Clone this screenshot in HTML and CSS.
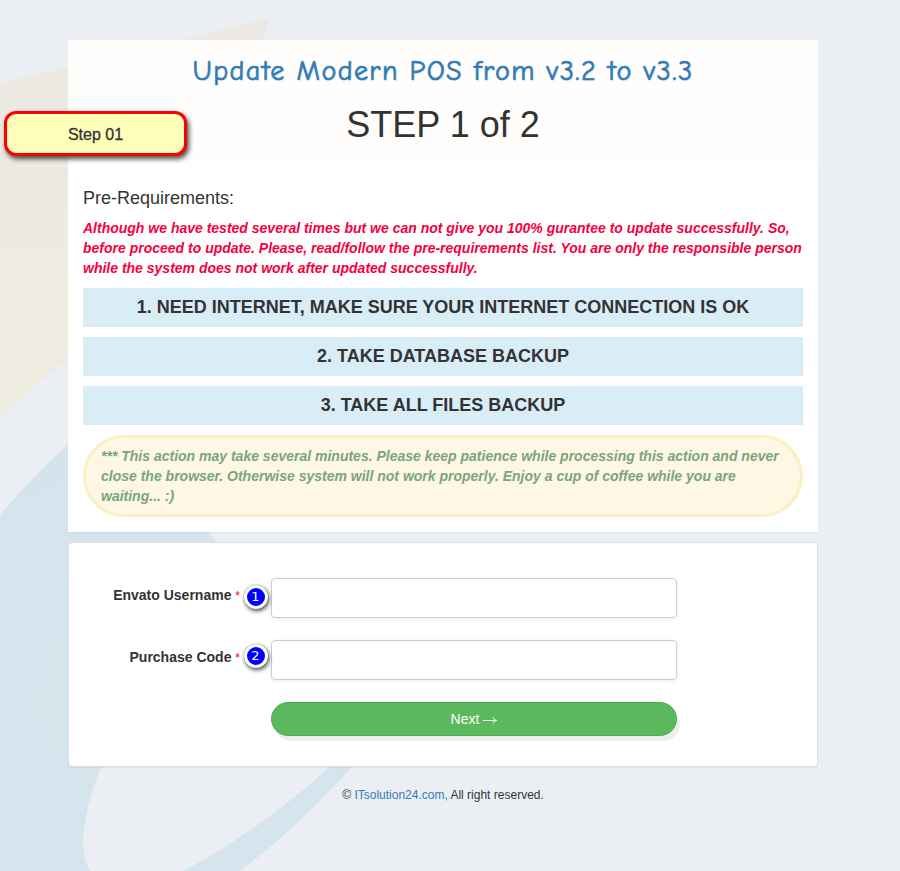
FILE: index.html
```html
<!DOCTYPE html>
<html lang="en">
<head>
<meta charset="utf-8">
<title>Update Modern POS</title>
<link rel="stylesheet" href="styles.css">
</head>
<body>
<svg class="backdrop" viewBox="0 0 900 871" aria-hidden="true">
  <defs>
    <radialGradient id="blue" gradientUnits="userSpaceOnUse" cx="130" cy="700" r="240">
      <stop offset="0" stop-color="#d3e6ec"/><stop offset="1" stop-color="#d6e3ed"/>
    </radialGradient>
    <linearGradient id="sand" x1="0" y1="0" x2="0" y2="1">
      <stop offset="0" stop-color="#ece9e4"/><stop offset="1" stop-color="#eeebdf"/>
    </linearGradient>
  </defs>
  <path fill="url(#sand)" d="M0 83L68 67L181 40L269 18Q240 160 150 300L68 359Q40 381 0 419Z"/>
  <path fill="url(#blue)" d="M0 515Q34 475 68 444L150 475Q188 510 217 542L360 720L352 767Q290 835 239 871H0Z"/>
  <path fill="#ebeff4" d="M90 871C77 850 84 810 101 767L170 640L420 700L329 767C290 804 230 847 183 871Z"/>
</svg>
<main class="page">
  <section class="intro">
    <header class="heading">
      <h1 class="title">Update Modern POS from v3.2 to v3.3</h1>
      <h2 class="step">STEP 1 of 2</h2>
    </header>
    <div class="requirements">
      <h3>Pre-Requirements:</h3>
      <p class="warning">Although we have tested several times but we can not give you 100% gurantee to update successfully. So,<br>before proceed to update. Please, read/follow the pre-requirements list. You are only the responsible person<br>while the system does not work after updated successfully.</p>
      <div class="item">1. NEED INTERNET, MAKE SURE YOUR INTERNET CONNECTION IS OK</div>
      <div class="item">2. TAKE DATABASE BACKUP</div>
      <div class="item">3. TAKE ALL FILES BACKUP</div>
      <p class="notice">*** This action may take several minutes. Please keep patience while processing this action and never<br>close the browser. Otherwise system will not work properly. Enjoy a cup of coffee while you are<br>waiting... :)</p>
    </div>
    <div class="callout">Step 01</div>
  </section>
  <form class="panel">
    <div class="row">
      <label for="username">Envato Username <span class="star">*</span></label>
      <span class="field"><span class="badge">1</span><input id="username" type="text"></span>
    </div>
    <div class="row">
      <label for="code">Purchase Code <span class="star">*</span></label>
      <span class="field"><span class="badge second">2</span><input id="code" type="text"></span>
    </div>
    <button type="button">Next <svg width="14" height="8" viewBox="0 0 14 8"><path d="M0 4.5H13M10 1.5Q11 4 13.5 4.5Q11 5 10 7.5" fill="none" stroke="#fff"/></svg></button>
  </form>
  <footer>© <a>ITsolution24.com,</a> All right reserved.</footer>
</main>
</body>
</html>
```

FILE: styles.css
```css
* { box-sizing: border-box; }
body {
  margin: 0;
  min-height: 871px;
  padding: 40px 14px 0 0;
  background: #ebeff4;
  color: #333;
  font: 14px/20px "Liberation Sans", Arial, sans-serif;
  overflow: hidden;
}
h1, h2, h3, p { margin: 0; font-weight: 400; }
.backdrop { position: absolute; top: 0; left: 0; width: 900px; height: 871px; z-index: -1; }
.page { width: 750px; margin: 0 auto; }
.intro {
  position: relative;
  height: 492px;
  background: #fff;
  box-shadow: 0 1px 1px rgba(0, 0, 0, .05);
}
.heading { height: 123px; padding-top: 14px; background: #fffefc; text-align: center; white-space: nowrap; }
.title {
  color: #337ab7;
  font: 28px/34px "Comic Sans MS", "Comic Neue", Lato, sans-serif;
  letter-spacing: 1.42px;
  text-shadow: 1px 1px 1px #d5f0ea;
  -webkit-text-stroke: .7px #337ab7;
}
.step { margin-top: 17px; font-size: 36px; line-height: 40px; }
.requirements { padding: 25px 15px 0; white-space: nowrap; }
.requirements h3 { font-size: 18px; line-height: 20px; }
.warning { margin: 10px 0; color: #f7003f; font-weight: 700; font-style: italic; }
.item {
  height: 39px;
  margin-bottom: 10px;
  background: #d9edf7;
  font-size: 18px;
  font-weight: 700;
  line-height: 38px;
  text-align: center;
}
.notice {
  height: 82px;
  padding: 8px 15px;
  border: 3px solid #faf0c3;
  border-radius: 41px;
  background: #fdf7e3;
  color: #7aa57d;
  font-weight: 700;
  font-style: italic;
}
.callout {
  position: absolute;
  left: -64px;
  top: 71px;
  width: 183px;
  height: 45px;
  border: 3px solid #f00;
  border-radius: 12px;
  background: #ffffb9;
  box-shadow: 2px 3px 5px rgba(0, 0, 0, .7);
  font-size: 16px;
  line-height: 41px;
  text-align: center;
  -webkit-text-stroke: .3px #333;
}
.panel {
  height: 225px;
  margin-top: 10px;
  padding-top: 35px;
  border: 1px solid #dddfe2;
  border-radius: 4px;
  background: #fff;
  box-shadow: 0 1px 1px rgba(0, 0, 0, .05);
}
.row { display: flex; height: 40px; margin-bottom: 22px; }
label { width: 171px; padding-top: 7px; font-weight: 700; text-align: right; white-space: nowrap; }
.star { color: #f00; font-size: 12px; font-weight: 400; }
.field { position: relative; width: 406px; margin-left: 31px; }
input {
  display: block;
  width: 100%;
  height: 40px;
  border: 1px solid #ccc;
  border-radius: 4px;
  background: #fff;
  box-shadow: 0 1px 5px rgba(0, 0, 0, .07);
}
.badge {
  position: absolute;
  left: -27.5px;
  top: 6.5px;
  width: 24px;
  height: 24px;
  border: 3px solid #fff;
  border-radius: 50%;
  background: #00f;
  box-shadow: 1px 2px 4px rgba(0, 0, 0, .7), 0 0 1px #777;
  color: #fff;
  font: 13px/18px "DejaVu Sans", sans-serif;
  text-align: center;
}
.second { top: 3.5px; }
button {
  display: flex;
  align-items: center;
  justify-content: center;
  gap: 4px;
  width: 406px;
  height: 34px;
  margin-left: 202px;
  padding: 0;
  border: 1px solid #4cae4c;
  border-radius: 17px;
  background: #5cb85c;
  box-shadow: 3px 5px 0 #eee;
  color: #fff;
  font: 14px/20px "Liberation Sans", Arial, sans-serif;
}
button svg { margin-top: 2px; }
footer { margin-top: 18px; font-size: 12px; text-align: center; }
footer a { color: #337ab7; }
```
